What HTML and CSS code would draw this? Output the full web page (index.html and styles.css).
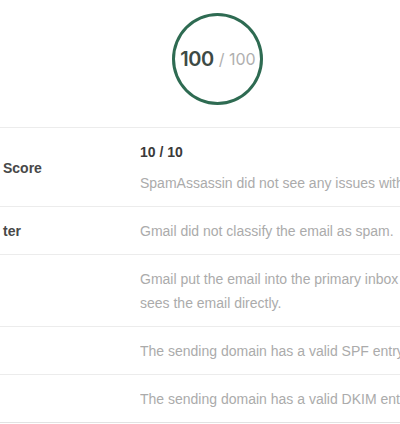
FILE: index.html
```html
<!DOCTYPE html>
<html>
<head>
<meta charset="utf-8">
<link rel="stylesheet" href="styles.css">
</head>
<body>
<div class="page">
  <div class="score-wrap">
    <div class="score-ring">
      <span class="score-main">100</span><span class="score-sep">/ 100</span>
    </div>
  </div>
  <div class="table">
    <div class="row">
      <div class="label">Score</div>
      <div class="detail">
        <div class="title">10 / 10</div>
        <div class="desc spaced">SpamAssassin did not see any issues with your email.</div>
      </div>
    </div>
    <div class="row">
      <div class="label">ter</div>
      <div class="detail">
        <div class="desc">Gmail did not classify the email as spam.</div>
      </div>
    </div>
    <div class="row">
      <div class="label"></div>
      <div class="detail">
        <div class="desc">Gmail put the email into the primary inbox so the recipient<br>sees the email directly.</div>
      </div>
    </div>
    <div class="row">
      <div class="label"></div>
      <div class="detail">
        <div class="desc">The sending domain has a valid SPF entry.</div>
      </div>
    </div>
    <div class="row last">
      <div class="label"></div>
      <div class="detail">
        <div class="desc">The sending domain has a valid DKIM entry.</div>
      </div>
    </div>
  </div>
</div>
</body>
</html>
```

FILE: styles.css
```css
html, body {
  margin: 0;
  padding: 0;
  background: #ffffff;
  overflow: hidden;
}
body {
  font-family: "Liberation Sans", Arial, sans-serif;
  color: #333;
}
.page {
  width: 400px;
}
.score-wrap {
  display: flex;
  justify-content: center;
  padding: 13px 0 0 34px;
  height: 127px;
  box-sizing: border-box;
}
.score-ring {
  width: 91px;
  height: 92px;
  box-sizing: border-box;
  border: 3.5px solid #2e6b52;
  border-radius: 50%;
  display: flex;
  align-items: center;
  justify-content: center;
  gap: 5px;
  padding-left: 2px;
}
.score-main {
  font-family: Inter, "Noto Sans", sans-serif;
  font-size: 20px;
  font-weight: 600;
  color: #3d4a45;
  letter-spacing: -0.5px;
}
.score-sep {
  font-family: Inter, "Noto Sans", sans-serif;
  font-size: 16px;
  font-weight: 400;
  color: #b0b0b0;
}
.table {
  border-top: 1px solid #ececec;
}
.row {
  display: flex;
  border-bottom: 1px solid #ececec;
  padding: 12px 0 11px 0;
}
.row.last {
  border-bottom-color: #e2e2e2;
}
.label {
  width: 140px;
  flex-shrink: 0;
  box-sizing: border-box;
  padding-left: 3px;
  display: flex;
  align-items: center;
  font-size: 14px;
  font-weight: 700;
  color: #484848;
}
.detail {
  flex: 1;
  white-space: nowrap;
  overflow: hidden;
}
.title {
  font-size: 14px;
  font-weight: 700;
  color: #3a3a3a;
  line-height: 24px;
}
.desc {
  font-size: 14px;
  line-height: 24px;
  color: #ababab;
}
.desc.spaced {
  margin-top: 7px;
}
```
